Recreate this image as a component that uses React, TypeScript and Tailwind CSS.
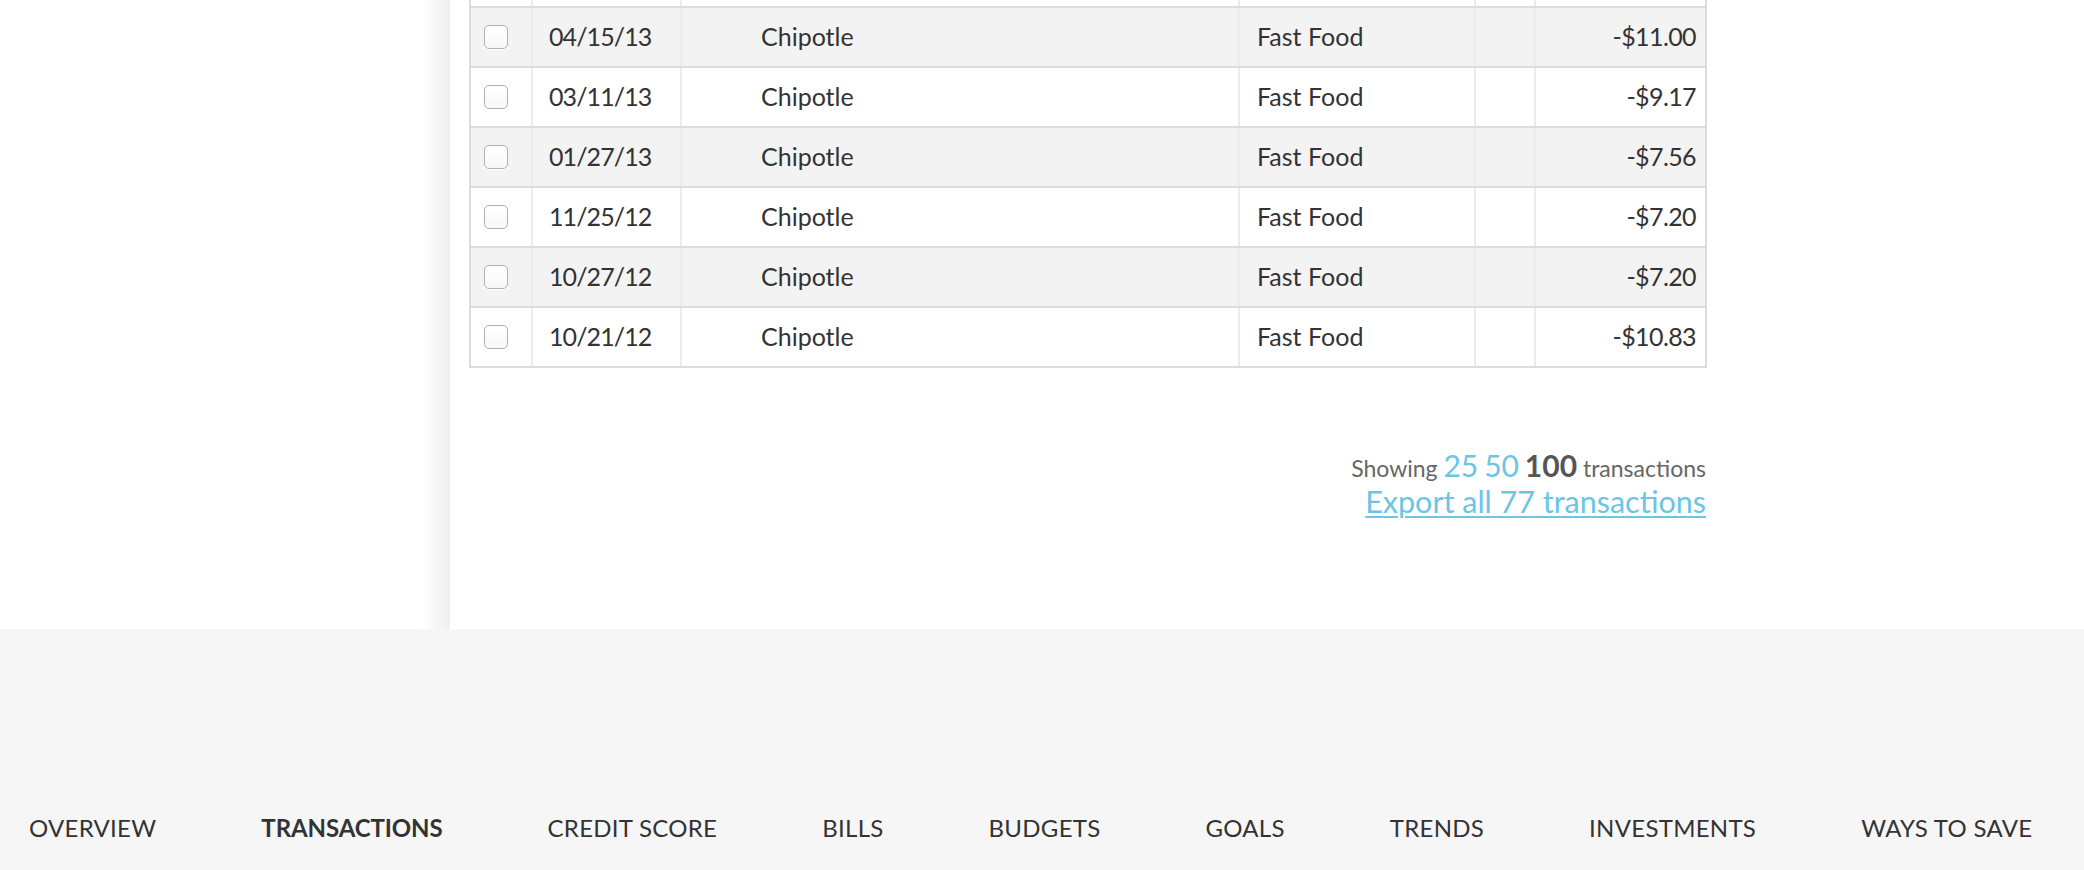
import React from "react";

const rows = [
  { date: "04/15/13", amount: "-$11.00" },
  { date: "03/11/13", amount: "-$9.17" },
  { date: "01/27/13", amount: "-$7.56" },
  { date: "11/25/12", amount: "-$7.20" },
  { date: "10/27/12", amount: "-$7.20" },
  { date: "10/21/12", amount: "-$10.83" },
];

const nav = [
  "OVERVIEW",
  "TRANSACTIONS",
  "CREDIT SCORE",
  "BILLS",
  "BUDGETS",
  "GOALS",
  "TRENDS",
  "INVESTMENTS",
  "WAYS TO SAVE",
];

function Checkbox() {
  return (
    <div className="w-[24px] h-[24px] rounded-[5px] border border-[#b0b0b0] bg-gradient-to-b from-white to-[#f7f7f7] shadow-[0_1px_0_rgba(255,255,255,0.9)]" />
  );
}

function Row({ date, amount, striped }: { date: string; amount: string; striped: boolean }) {
  return (
    <div
      className={`flex h-[60px] border-t-2 border-[#dcdcdc] text-[25px] text-[#333] ${
        striped ? "bg-[#f3f3f3]" : "bg-white"
      }`}
    >
      <div className="w-[62px] border-r-2 border-[#ececec] flex items-center pl-[13px]">
        <Checkbox />
      </div>
      <div className="w-[149px] border-r-2 border-[#ececec] flex items-center pl-[16px] tracking-[-0.9px]">{date}</div>
      <div className="w-[558px] border-r-2 border-[#ececec] flex items-center pl-[79px]">Chipotle</div>
      <div className="w-[236px] border-r-2 border-[#ececec] flex items-center pl-[17px]">Fast Food</div>
      <div className="w-[60px] border-r-2 border-[#ececec]" />
      <div className="w-[169px] flex items-center justify-end pr-[9px] tracking-[-0.6px]">{amount}</div>
    </div>
  );
}

export default function App() {
  return (
    <div className="w-[2084px] h-[870px] overflow-hidden bg-white" style={{ fontFamily: "Lato, 'Open Sans', sans-serif" }}>
      <div className="flex h-[629px]">
        <div className="w-[450px] flex justify-end">
          <div className="w-[28px] h-full bg-gradient-to-r from-white to-[#efefef]" />
        </div>
        <div className="flex-1 pl-[19px]">
          <div className="w-[1238px]">
            <div className="border-x-2 border-b-2 border-[#dcdcdc]">
              <div className="flex h-[6px] bg-white">
                <div className="w-[62px] border-r-2 border-[#ececec]" />
                <div className="w-[149px] border-r-2 border-[#ececec]" />
                <div className="w-[558px] border-r-2 border-[#ececec]" />
                <div className="w-[236px] border-r-2 border-[#ececec]" />
                <div className="w-[60px] border-r-2 border-[#ececec]" />
                <div className="w-[169px]" />
              </div>
              {rows.map((r, i) => (
                <Row key={i} date={r.date} amount={r.amount} striped={i % 2 === 0} />
              ))}
            </div>
            <div className="flex flex-col items-end pt-[81px] pr-[1px]">
              <div className="text-[#666] text-[23px] leading-[32px]">
                Showing <span className="text-[30px] text-[#6cc5e5]">25</span>{" "}
                <span className="text-[30px] text-[#6cc5e5]">50</span>{" "}
                <span className="text-[30px] font-bold text-[#555]">100</span> transactions
              </div>
              <a className="text-[30.5px] leading-[34px] text-[#6cc5e5] underline underline-offset-[3px] decoration-[2px]">
                Export all 77 transactions
              </a>
            </div>
          </div>
        </div>
      </div>
      <div className="h-[241px] bg-[#f6f6f6] pt-[181px]">
        <div className="flex gap-[105px] pl-[29px] text-[24px] text-[#333]">
          {nav.map((n) => (
            <span key={n} className={n === "TRANSACTIONS" ? "font-bold tracking-[-0.1px]" : "tracking-[0.28px]"}>
              {n}
            </span>
          ))}
        </div>
      </div>
    </div>
  );
}
